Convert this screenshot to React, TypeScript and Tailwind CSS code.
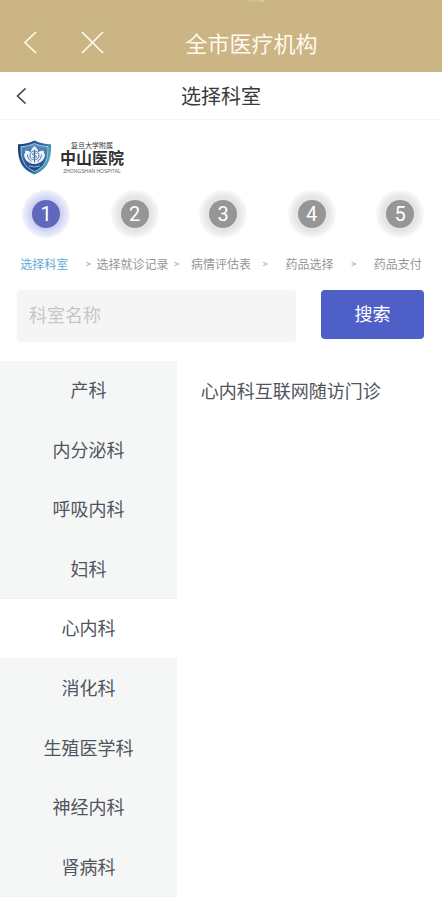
import clsx from "clsx";
import { Fragment } from "react";

const steps = ["选择科室", "选择就诊记录", "病情评估表", "药品选择", "药品支付"];

const departments = [
  "产科",
  "内分泌科",
  "呼吸内科",
  "妇科",
  "心内科",
  "消化科",
  "生殖医学科",
  "神经内科",
  "肾病科",
];

const currentStep = 0;
const currentDepartment = "心内科";
const clinics = ["心内科互联网随访门诊"];

const AppBar = () => (
  <header className="relative flex h-[72px] items-center justify-center bg-[#cbb584] pt-3 text-[#fffaf0]">
    {/* Status bar remainder */}
    <svg className="absolute top-0 left-[249px] h-[2px] w-4" viewBox="0 0 16 2" aria-hidden="true">
      <path
        d="M1.5 0v1.5M4.5 0v1M7 0v1.5M10 0v1.5M12.5 0v2M14.5 0v1.5"
        stroke="#e6d7b4"
        fill="none"
      />
    </svg>
    <div className="absolute left-[22px] flex gap-10">
      <button type="button" aria-label="返回" className="py-2">
        <svg className="h-6 w-[18px]" viewBox="0 0 18 24" fill="none" stroke="currentColor" strokeWidth="1.7">
          <path d="M14 2L3 12.5 14 23" />
        </svg>
      </button>
      <button type="button" aria-label="关闭" className="py-2">
        <svg className="h-6 w-6" viewBox="0 0 24 24" fill="none" stroke="currentColor" strokeWidth="1.7">
          <path d="M2 2l21 21M23 2L2 23" />
        </svg>
      </button>
    </div>
    <p className="pl-[61px] text-[22px] leading-8">全市医疗机构</p>
  </header>
);

const PageTitle = () => (
  <div className="relative flex h-12 items-center justify-center border-b border-[#f5f5f5] text-[#3a3a3a]">
    <button type="button" aria-label="返回" className="absolute left-4 py-2">
      <svg className="h-4 w-3" viewBox="0 0 12 16" fill="none" stroke="currentColor" strokeWidth="1.5">
        <path d="M9.5 0.500L1.500 8l8 7.500" />
      </svg>
    </button>
    <h1 className="text-xl">选择科室</h1>
  </div>
);

const HospitalLogo = () => (
  <div className="flex items-center gap-2 px-[17px] pt-5">
    <svg className="h-[35px] w-[35px]" viewBox="0 0 35 35" aria-hidden="true">
      <defs>
        <linearGradient id="shield" x1="0" y1="0" x2="1" y2="0.4">
          <stop offset="0" stopColor="#173b77" />
          <stop offset="0.6" stopColor="#2a5c9a" />
          <stop offset="1" stopColor="#4aa3bd" />
        </linearGradient>
        <linearGradient id="field" x1="0" y1="0" x2="0" y2="1">
          <stop offset="0" stopColor="#5b95c4" />
          <stop offset="1" stopColor="#1d3f80" />
        </linearGradient>
      </defs>
      <path
        d="M17.5 0.5C12 3.3 6.5 4.3 1 4.2 0.6 18 3 28.500 17.5 34.5 32 28.500 34.400 18 34 4.200 28.500 4.300 23 3.300 17.500 0.500z"
        fill="url(#shield)"
      />
      <path
        d="M17.5 3.500C12.800 5.500 8.500 6.500 4 6.600 3.900 18.500 6 26.500 17.500 31.500 29 26.500 31.100 18.500 31 6.600 26.500 6.500 22.200 5.500 17.500 3.500z"
        fill="url(#field)"
        stroke="#b9dbea"
        strokeWidth="0.8"
      />
      {/* Flower */}
      <path
        d="M17.5 6c-2.200 2-3.600 4-4 6.200-2-1.400-4-1.600-5.500-1.200.6 1.300-.2 2.500-1 3.500.2 5 4 9 10.500 9.500 6.500-.5 10.300-4.500 10.500-9.500-.8-1-1.600-2.200-1-3.500-1.500-.4-3.500-.2-5.500 1.200-.4-2.200-1.800-4.200-4-6.200z"
        fill="#eef4fb"
      />
      <circle cx="17.500" cy="15.500" r="4.500" fill="none" stroke="#5a7fb8" strokeWidth="1.100" />
      <path
        d="M17.500 9.500v13M19.500 13.500c-2-1-4-.4-4 .7 0 1.600 4 1 4 2.600 0 1.300-2.300 1.500-4 .6M10.500 14.500c0 3 1.500 5.500 4 7M24.500 14.500c0 3-1.500 5.500-4 7"
        fill="none"
        stroke="#4a70ad"
        strokeWidth="1"
      />
      <path d="M12 26q5.500 2 11 0" fill="none" stroke="#8fb5d8" strokeWidth="1" />
    </svg>
    <div className="flex flex-col items-center font-['Liberation_Sans','Noto_Sans_CJK_SC',sans-serif] text-[#303236]">
      <span className="text-[7px] leading-[8px]">复旦大学附属</span>
      <span className="text-base leading-[18px] font-bold">中山医院</span>
      <span className="text-[5px] leading-[6px] text-[#666]">ZHONGSHAN HOSPITAL</span>
    </div>
  </div>
);

const Steps = () => (
  <div className="pt-[15px]">
    <ol className="flex justify-between pr-[18px] pl-[22px]">
      {steps.map((step, index) => (
        <li
          key={step}
          className={clsx(
            "flex size-12 items-center justify-center rounded-full",
            index === currentStep
              ? "bg-radial from-[#cfd1f1] from-45% to-[#f3f3fc] to-70%"
              : "bg-radial from-[#e5e5e5] from-50% to-[#f8f8f8] to-70%",
          )}
        >
          <span
            className={clsx(
              "flex size-7 items-center justify-center rounded-full font-[Roboto,sans-serif] text-xl text-white",
              index === currentStep ? "bg-[#5f68bb]" : "bg-[#969696]",
            )}
          >
            {index + 1}
          </span>
        </li>
      ))}
    </ol>
    <div className="mt-[18px] flex px-1 text-xs text-[#969696]">
      {steps.map((step, index) => (
        <Fragment key={step}>
          {index > 0 && <span className="w-2 text-center text-[9px] leading-4">&gt;</span>}
          <span
            className={clsx(
              "flex-1 text-center whitespace-nowrap",
              index === currentStep && "text-[#63abd8]",
            )}
          >
            {step}
          </span>
        </Fragment>
      ))}
    </div>
  </div>
);

const SearchForm = () => (
  <form
    className="flex items-start gap-[25px] pt-[18px] pr-[18px] pl-[17px]"
    onSubmit={(e) => e.preventDefault()}
  >
    <input
      type="text"
      aria-label="科室名称"
      placeholder="科室名称"
      className="h-[52px] min-w-0 flex-1 rounded-sm bg-[#f5f5f5] px-3 pb-1 text-lg text-[#44484e] outline-none placeholder:text-[#c6c6c6]"
    />
    <button type="submit" className="h-[49px] w-[103px] rounded bg-[#4f5fc8] pb-1 text-lg text-white">
      搜索
    </button>
  </form>
);

export default function App() {
  return (
    <div className="min-h-screen bg-white font-['Noto_Sans_CJK_SC',sans-serif]">
      <AppBar />
      <PageTitle />
      <HospitalLogo />
      <Steps />
      <SearchForm />

      {/* Departments and their clinics */}
      <div className="mt-[19px] flex text-lg text-[#50545c]">
        <nav className="grid min-h-[536px] w-2/5 auto-rows-fr">
          {departments.map((department) => (
            <button
              key={department}
              type="button"
              className={clsx(
                "border-b border-[#f1f3f3] pb-0.5",
                department === currentDepartment ? "bg-white" : "bg-[#f5f7f7]",
              )}
            >
              {department}
            </button>
          ))}
        </nav>
        <ul className="flex-1 pl-6">
          {clinics.map((clinic) => (
            <li key={clinic}>
              <button type="button" className="h-[59px] pb-0.5 whitespace-nowrap">
                {clinic}
              </button>
            </li>
          ))}
        </ul>
      </div>
    </div>
  );
}
